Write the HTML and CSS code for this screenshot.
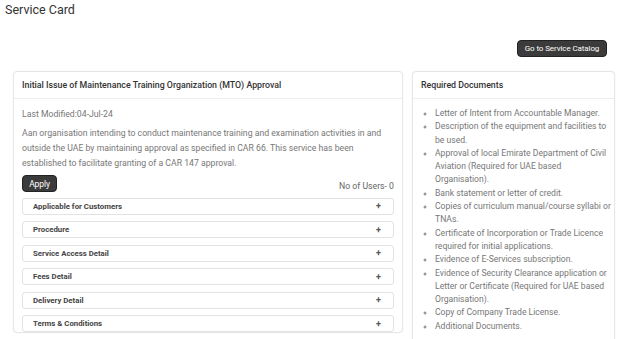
FILE: index.html
```html
<!DOCTYPE html>
<html lang="en">
<head>
    <meta charset="UTF-8">
    <meta name="viewport" content="width=device-width, initial-scale=1.0">
    <title>Service Card</title>
    <link rel="stylesheet" href="styles.css">
</head>
<body>
<div class="page-header">
    <h1>Service Card</h1>
</div>
<div class="toolbar">
    <button type="button" class="btn-dark btn-catalog">Go to Service Catalog</button>
</div>
<div class="service-layout">
    <div class="card">
        <div class="card-header">Initial Issue of Maintenance Training Organization (MTO) Approval</div>
        <div class="card-body">
            <p class="modified">Last Modified:04-Jul-24</p>
            <p class="desc">Aan organisation intending to conduct maintenance training and examination activities in and outside the UAE by maintaining approval as specified in CAR 66. This service has been established to facilitate granting of a CAR 147 approval.</p>
            <div class="apply-row">
                <button type="button" class="btn-dark btn-apply">Apply</button>
                <span class="users">No of Users- 0</span>
            </div>
            <div class="accordion">
                <div class="acc-item"><span>Applicable for Customers</span><span class="plus">+</span></div>
                <div class="acc-item"><span>Procedure</span><span class="plus">+</span></div>
                <div class="acc-item"><span>Service Access Detail</span><span class="plus">+</span></div>
                <div class="acc-item"><span>Fees Detail</span><span class="plus">+</span></div>
                <div class="acc-item"><span>Delivery Detail</span><span class="plus">+</span></div>
                <div class="acc-item"><span>Terms &amp; Conditions</span><span class="plus">+</span></div>
            </div>
        </div>
    </div>
    <div class="card">
        <div class="card-header">Required Documents</div>
        <div class="card-body docs-body">
            <ul class="docs">
                <li>Letter of Intent from Accountable Manager.</li>
                <li>Description of the equipment and facilities to be used.</li>
                <li>Approval of local Emirate Department of Civil Aviation (Required for UAE based Organisation).</li>
                <li>Bank statement or letter of credit.</li>
                <li>Copies of curriculum manual/course syllabi or TNAs.</li>
                <li>Certificate of Incorporation or Trade Licence required for initial applications.</li>
                <li>Evidence of E-Services subscription.</li>
                <li>Evidence of Security Clearance application or Letter or Certificate (Required for UAE based Organisation).</li>
                <li>Copy of Company Trade License.</li>
                <li>Additional Documents.</li>
            </ul>
        </div>
    </div>
</div>
</body>
</html>
```

FILE: styles.css
```css
body {
    margin: 0;
    background-color: #fff;
    font-family: Roboto, "Liberation Sans", Arial, sans-serif;
    color: #333;
}

.page-header {
    padding: 1px 5px 0;
}

h1 {
    margin: 0;
    font-size: 12.5px;
    font-weight: 400;
    line-height: 17px;
    color: #333;
}

.toolbar {
    display: flex;
    justify-content: flex-end;
    padding: 22px 11px 14px 0;
}

.btn-dark {
    background-color: #3b3b3b;
    color: #fff;
    border: 1px solid #222;
    border-radius: 4px;
    font-family: inherit;
    font-size: 8px;
    cursor: pointer;
    padding: 0;
    letter-spacing: -0.1px;
}

.btn-catalog {
    width: 90px;
    height: 17px;
}

.service-layout {
    display: grid;
    grid-template-columns: 390px 203px;
    gap: 9px;
    padding: 0 0 0 13px;
    align-items: start;
}

.card {
    border: 1px solid #e6e6e6;
    border-radius: 4px;
    box-shadow: 0 0 2px rgba(0, 0, 0, 0.06);
    background: #fff;
}

.card-header {
    height: 26px;
    line-height: 26px;
    padding: 0 8px;
    font-size: 8.8px;
    font-weight: 500;
    color: #333;
    border-bottom: 1px solid #eee;
    white-space: nowrap;
}

.card-body {
    padding: 8px 8px 0;
}

.modified {
    margin: 0 0 4px;
    font-size: 8.7px;
    line-height: 15px;
    color: #777;
}

.desc {
    margin: 0;
    font-size: 8.7px;
    line-height: 15px;
    color: #777;
}

.apply-row {
    display: flex;
    justify-content: space-between;
    align-items: flex-end;
    margin-top: 4px;
}

.btn-apply {
    width: 35px;
    height: 17px;
    font-size: 8.5px;
}

.users {
    font-size: 8.7px;
    color: #666;
    line-height: 12px;
}

.accordion {
    display: flex;
    flex-direction: column;
    gap: 6.5px;
    margin-top: 5.5px;
}

.acc-item {
    display: flex;
    justify-content: space-between;
    align-items: center;
    height: 15px;
    padding: 0 12px 0 10px;
    border: 1px solid #e3e3e3;
    border-radius: 3px;
    font-size: 7.8px;
    font-weight: 700;
    color: #444;
}

.plus {
    font-weight: 700;
    font-size: 9px;
    color: #555;
}

.docs-body {
    padding: 8px 1px 16px 0;
}

.docs {
    margin: 0;
    padding-left: 22px;
    list-style-type: circle;
    font-size: 8.6px;
    line-height: 13.3px;
    color: #777;
}

.docs li::marker {
    font-size: 8px;
}
```
